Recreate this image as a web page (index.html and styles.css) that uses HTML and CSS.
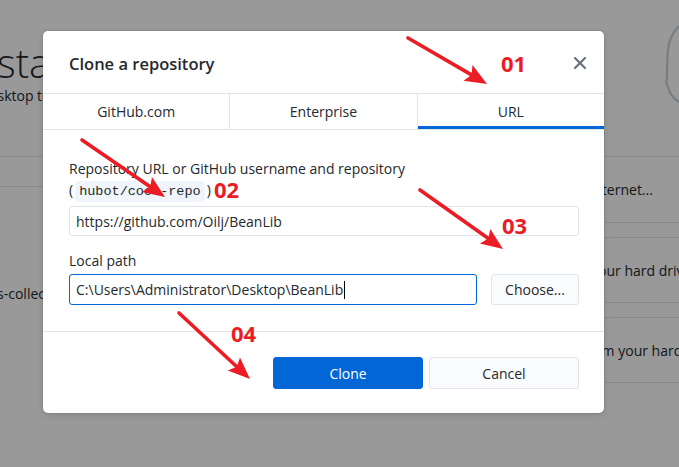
FILE: index.html
```html
<!DOCTYPE html>
<html lang="en">
<head>
<meta charset="utf-8">
<title>Clone a repository</title>
<link rel="stylesheet" href="styles.css">
</head>
<body>
<div class="page">
  <section class="welcome">
    <h1 class="welcome-title">Let's get started!</h1>
    <p class="welcome-sub">Add a repository to GitHub Desktop to start collaborating</p>
    <div class="repo-header"><span class="repo-header-text">Your repositories</span></div>
    <div class="repo-list">
      <div class="repo-item">octocat/awesome-s-collection</div>
    </div>
  </section>
  <section class="options">
    <div class="art">
      <svg width="40" height="120" viewBox="0 0 40 120"><path d="M40 26 C34 32 30 40 29 50 C28 60 28 70 28 78 C27 81 27 84 29 87 C30 92 34 98 40 102" fill="none" stroke="#c9d1d9" stroke-width="2.2"/></svg>
    </div>
    <div class="option">Clone a repository from the Internet...</div>
    <div class="option">Create a New Repository on your hard drive...</div>
    <div class="option">Add an Existing Repository from your hard drive...</div>
  </section>
</div>
<div class="overlay"></div>
<div class="dialog">
  <header class="dialog-header">
    <h2 class="dialog-title">Clone a repository</h2>
    <button class="close" aria-label="Close">
      <svg width="12" height="12" viewBox="0 0 12 12"><path d="M1 1L11 11M11 1L1 11" stroke="#6a737d" stroke-width="2.2" stroke-linecap="round"/></svg>
    </button>
  </header>
  <nav class="tabs">
    <div class="tab">GitHub.com</div>
    <div class="tab">Enterprise</div>
    <div class="tab selected">URL</div>
  </nav>
  <div class="dialog-body">
    <label class="label">Repository URL or GitHub username and repository<br>(<code class="code">hubot/cool-repo</code>)</label>
    <div class="input first">https://github.com/Oilj/BeanLib</div>
    <label class="label path-label">Local path</label>
    <div class="path-row">
      <div class="input focused">C:\Users\Administrator\Desktop\BeanLib<span class="caret"></span></div>
      <button class="btn choose">Choose...</button>
    </div>
  </div>
  <footer class="dialog-footer">
    <button class="btn primary">Clone</button>
    <button class="btn">Cancel</button>
  </footer>
</div>
<svg class="annotations" width="679" height="467" viewBox="0 0 679 467">
  <g stroke="#ec1c24" stroke-width="3.6" stroke-linecap="round" fill="none">
    <line x1="408" y1="38" x2="471.5" y2="74.9"/>
    <line x1="82" y1="140" x2="150.2" y2="186.8"/>
    <line x1="420" y1="190" x2="488.4" y2="238.5"/>
    <line x1="179" y1="313" x2="236.8" y2="366.7"/>
  </g>
  <g fill="#ec1c24">
    <polygon points="487,84 463.5,80.7 471.5,74.9 472.5,65.1"/>
    <polygon points="165,197 141.8,191.9 150.2,186.8 152,177.1"/>
    <polygon points="503,249 479.9,243.5 488.4,238.5 490.3,228.9"/>
    <polygon points="250,379 227.8,370.6 236.8,366.7 240,357.4"/>
  </g>
  <g class="num" fill="#ec1c24">
    <text x="501" y="72">01</text>
    <text x="214" y="198">02</text>
    <text x="502" y="234">03</text>
    <text x="231" y="342">04</text>
  </g>
</svg>
</body>
</html>
```
FILE: styles.css
```css
* { box-sizing: border-box; }
html, body { margin: 0; padding: 0; }
body {
  width: 679px;
  height: 467px;
  overflow: hidden;
  position: relative;
  background: #ffffff;
  font-family: "Open Sans", "Noto Sans", sans-serif;
  font-size: 14px;
  color: #24292e;
}
.page {
  display: flex;
  height: 467px;
}
.welcome {
  width: 390px;
  flex: none;
  padding-top: 37px;
  overflow: hidden;
}
.welcome-title {
  margin: 0 0 0 -162px;
  font-size: 40px;
  font-weight: 300;
  line-height: 52px;
  white-space: nowrap;
}
.welcome-sub {
  margin: -3px 0 0 -199px;
  font-size: 14px;
  line-height: 20px;
  white-space: nowrap;
}
.repo-header {
  margin-top: 50px;
  height: 31px;
  border-top: 1px solid #e1e4e8;
  border-bottom: 1px solid #e1e4e8;
  line-height: 29px;
  padding-left: 60px;
}
.repo-list {
  padding-top: 97px;
}
.repo-item {
  margin-left: -123px;
  font-size: 14px;
  white-space: nowrap;
}
.options {
  flex: 1;
  min-width: 0;
  display: flex;
  flex-direction: column;
  gap: 14px;
  padding-left: 4px;
}
.art {
  height: 156px;
  display: flex;
  justify-content: flex-end;
  margin-bottom: -14px;
}
.option {
  height: 67px;
  border-top: 1px solid #e1e4e8;
  border-bottom: 1px solid #e1e4e8;
  display: flex;
  align-items: center;
  padding-left: 12px;
  font-size: 14px;
  white-space: nowrap;
}
.option + .option { height: 66px; }
.overlay {
  position: absolute;
  inset: 0;
  background: rgba(0, 0, 0, 0.4);
}
.dialog {
  position: absolute;
  left: 43px;
  top: 31px;
  width: 561px;
  height: 382px;
  background: #ffffff;
  border-radius: 5px;
  box-shadow: 0 0 0 1px rgba(0, 0, 0, 0.06), 0 2px 6px rgba(0, 0, 0, 0.12);
  display: flex;
  flex-direction: column;
}
.dialog-header {
  height: 63px;
  flex: none;
  display: flex;
  align-items: center;
  justify-content: space-between;
  padding: 2px 18px 0 26px;
  border-bottom: 1px solid #e1e4e8;
}
.dialog-title {
  margin: 0;
  font-size: 16.5px;
  font-weight: 600;
  color: #24292e;
}
.close {
  border: 0;
  background: none;
  padding: 0;
  width: 12px;
  height: 12px;
  display: flex;
}
.tabs {
  display: flex;
  height: 36px;
  flex: none;
  border-bottom: 1px solid #e1e4e8;
}
.tab {
  flex: 1;
  display: flex;
  align-items: center;
  justify-content: center;
  font-size: 14px;
  color: #24292e;
  border-right: 1px solid #e1e4e8;
  padding-bottom: 1px;
}
.tab:last-child { border-right: 0; }
.tab.selected {
  box-shadow: inset 0 -3px 0 #0366d6;
}
.dialog-body {
  padding: 28px 25px 26px 26px;
  border-bottom: 1px solid #e1e4e8;
  flex: none;
}
.label {
  display: block;
  font-size: 14px;
  line-height: 21px;
  color: #24292e;
}
.code {
  font-family: "Liberation Mono", "DejaVu Sans Mono", monospace;
  font-size: 13.5px;
  background: #f0f5fb;
  padding: 3px 4px;
  border-radius: 3px;
  margin: 0 2px;
}
.input {
  height: 30px;
  border: 1px solid #e1e4e8;
  border-radius: 3px;
  padding: 0 6px;
  display: flex;
  align-items: center;
  font-size: 14px;
  color: #24292e;
  white-space: nowrap;
}
.input.first { margin-top: 4px; }
.path-label { margin-top: 14px; }
.path-row {
  display: flex;
  gap: 14px;
  margin-top: 3px;
}
.input.focused {
  flex: 1;
  height: 31px;
  border-color: #0366d6;
}
.caret {
  display: inline-block;
  width: 1px;
  height: 18px;
  background: #000;
  margin-left: 1px;
}
.btn {
  font-family: "Open Sans", "Noto Sans", sans-serif;
  font-size: 14px;
  color: #24292e;
  background: #fafbfc;
  border: 1px solid #e1e4e8;
  border-radius: 3px;
  padding: 0;
}
.choose {
  width: 88px;
  height: 31px;
}
.dialog-footer {
  flex: 1;
  display: flex;
  justify-content: flex-end;
  align-items: flex-start;
  gap: 6px;
  padding: 25px 25px 0 0;
}
.dialog-footer .btn {
  width: 150px;
  height: 32px;
}
.btn.primary {
  background: #0366d6;
  border-color: #0366d6;
  color: #ffffff;
}
.annotations {
  position: absolute;
  left: 0;
  top: 0;
}
.num text {
  font-family: "Open Sans", "Noto Sans", sans-serif;
  font-weight: 700;
  font-size: 22px;
}
```
